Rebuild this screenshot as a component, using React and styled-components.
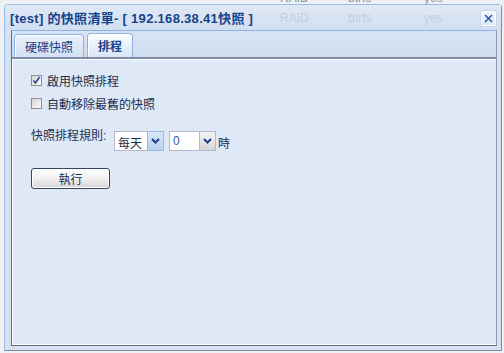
import React from "react";
import styled, { createGlobalStyle } from "styled-components";

const GlobalStyle = createGlobalStyle`
  html, body {
    margin: 0;
    padding: 0;
    background: #eef0f3;
    font-family: "Liberation Sans", "Noto Sans CJK TC", sans-serif;
    font-size: 12px;
  }
`;

const Page = styled.div`
  width: 504px;
  height: 353px;
  position: relative;
  overflow: hidden;
`;

const Backdrop = styled.div`
  height: 4px;
  overflow: hidden;
  position: relative;
`;

const GhostRow = styled.div`
  position: absolute;
  left: 0;
  top: ${p => p.top}px;
  display: flex;
  color: ${p => p.color};
  font-size: 12px;
  line-height: 14px;
  pointer-events: none;
`;

const GhostCell = styled.span`
  position: absolute;
  left: ${p => p.x}px;
  white-space: nowrap;
`;

const Window = styled.div`
  position: relative;
  margin: 0 2px 2px 4px;
  height: 347px;
  box-sizing: border-box;
  border: 1px solid #99bbe8;
  border-right-color: #7d8ea3;
  border-bottom-color: #7d8ea3;
  border-radius: 4px 4px 0 0;
  background: #d6e2f2;
  display: flex;
  flex-direction: column;
`;

const TitleBar = styled.div`
  position: relative;
  height: 25px;
  padding: 0 5px 0 5px;
  display: flex;
  align-items: center;
  background: linear-gradient(#dfe8f5, #d2dff0);
  overflow: hidden;
`;

const Title = styled.span`
  color: #15428b;
  font-weight: bold;
  font-size: 13px;
  letter-spacing: 0.3px;
  white-space: nowrap;
  position: relative;
  z-index: 1;
`;

const CloseBtn = styled.button`
  margin-left: auto;
  width: 15px;
  height: 15px;
  padding: 0;
  margin-top: 1px;
  border: 1px solid #ffffff;
  border-radius: 2px;
  background: linear-gradient(#f4f8fd, #dbe6f5);
  display: flex;
  align-items: center;
  justify-content: center;
  box-shadow: 0 0 0 1px #c5d5ea;
  position: relative;
  z-index: 1;
`;

const TabPanel = styled.div`
  flex: 1;
  margin: 0 4px 4px 6px;
  border: 1px solid #8db2e3;
  border-left-color: #5f6f84;
  border-bottom-color: #5f6f84;
  border-right-color: #8a9ab0;
  display: flex;
  flex-direction: column;
  background: #dfe8f6;
`;

const TabStrip = styled.div`
  height: 25px;
  padding: 1px 0 0 2px;
  display: flex;
  align-items: flex-end;
  gap: 3px;
  background: linear-gradient(#d8e4f4, #cfdcee);
  border-bottom: 2px solid #7e8fa5;
`;

const Tab = styled.div`
  height: ${p => (p.active ? 24 : 23)}px;
  box-sizing: border-box;
  padding: 0 10px;
  min-width: ${p => (p.active ? 46 : 68)}px;
  display: flex;
  align-items: center;
  justify-content: center;
  border: 1px solid #8db2e3;
  border-bottom: none;
  border-radius: 4px 4px 0 0;
  background: ${p =>
    p.active
      ? "linear-gradient(#ffffff, #e3edfa 60%, #dae6f6)"
      : "linear-gradient(#ebf2fb, #d2e0f3)"};
  color: #15428b;
  font-size: 12px;
  font-weight: ${p => (p.active ? "bold" : "normal")};
  box-shadow: inset 1px 1px 0 #ffffff;
`;

const Body = styled.div`
  flex: 1;
  border-top: 1px solid #ffffff;
  border-left: 1px solid #ffffff;
  border-bottom: 1px solid #ffffff;
  padding: 14px 0 0 18px;
  display: flex;
  flex-direction: column;
  color: #1c2f4f;
`;

const CheckRow = styled.label`
  display: flex;
  align-items: center;
  gap: 5px;
  height: 13px;
  margin-bottom: 10px;
  font-size: 12px;
`;

const Box = styled.span`
  width: 11px;
  height: 11px;
  box-sizing: border-box;
  border: 1px solid #8e8f8f;
  background: linear-gradient(135deg, #d4d4d4, #fafafa);
  display: flex;
  align-items: center;
  justify-content: center;
`;

const RuleRow = styled.div`
  display: flex;
  align-items: flex-start;
  margin-top: 9px;
`;

const RuleLabel = styled.span`
  font-size: 12px;
  width: 83px;
  line-height: 14px;
`;

const Combo = styled.div`
  display: flex;
  height: 20px;
  margin-top: 2px;
  margin-right: ${p => p.gap}px;
`;

const ComboText = styled.div`
  width: ${p => p.width}px;
  box-sizing: border-box;
  border: 1px solid #b5b8c8;
  border-right: none;
  background: #ffffff;
  color: ${p => p.color};
  font-size: 12px;
  padding: 2px 0 0 3px;
`;

const ComboArrow = styled.div`
  width: 17px;
  box-sizing: border-box;
  border: 1px solid ${p => (p.hot ? "#99bbe8" : "#b5b8c8")};
  background: ${p =>
    p.hot
      ? "linear-gradient(#d9e7f8, #b9cfee)"
      : "linear-gradient(#f4f4f4, #d6d6d6)"};
  display: flex;
  align-items: center;
  justify-content: center;
`;

const Unit = styled.span`
  font-size: 12px;
  margin-top: 5px;
`;

const RunButton = styled.button`
  margin-top: 17px;
  width: 79px;
  height: 21px;
  box-sizing: border-box;
  border: 1px solid #34455d;
  border-radius: 3px;
  background: linear-gradient(#ffffff, #f1f1f1 50%, #d4d4d4);
  color: #1c2f4f;
  font-family: "Liberation Sans", "Noto Sans CJK TC", sans-serif;
  font-size: 12px;
  padding: 0;
  box-shadow: inset 0 0 0 1px #ffffff;
`;

const ghosts = [
  { x: 280, t: "RAID" },
  { x: 348, t: "btrfs" },
  { x: 424, t: "yes" },
];

const CloseIcon = () => (
  <svg width="11" height="11" viewBox="0 0 11 11">
    <path d="M2 2 L9 9 M9 2 L2 9" stroke="#2d5aa8" strokeWidth="1.6" />
  </svg>
);

const Check = () => (
  <svg width="9" height="9" viewBox="0 0 9 9">
    <path d="M1.5 4.5 L3.5 7 L7.5 1" fill="none" stroke="#2a44a0" strokeWidth="1.6" />
  </svg>
);

const Chevron = () => (
  <svg width="9" height="6" viewBox="0 0 9 6">
    <path d="M1 1 L4.5 4.5 L8 1" fill="none" stroke="#1f3f8a" strokeWidth="2" />
  </svg>
);

const Checkbox = ({ checked, children }) => (
  <CheckRow>
    <Box>{checked && <Check />}</Box>
    {children}
  </CheckRow>
);

const App = () => (
  <Page>
    <GlobalStyle />
    <Backdrop>
      <GhostRow top={-9} color="#8c96a3">
        {ghosts.map(g => (
          <GhostCell key={g.t} x={g.x}>{g.t}</GhostCell>
        ))}
      </GhostRow>
    </Backdrop>
    <Window>
      <TitleBar>
        <GhostRow top={6} color="#c3cedd">
          {ghosts.map(g => (
            <GhostCell key={g.t} x={g.x - 5}>{g.t}</GhostCell>
          ))}
        </GhostRow>
        <Title>[test] 的快照清單- [ 192.168.38.41快照 ]</Title>
        <CloseBtn aria-label="close">
          <CloseIcon />
        </CloseBtn>
      </TitleBar>
      <TabPanel>
        <TabStrip>
          <Tab>硬碟快照</Tab>
          <Tab active>排程</Tab>
        </TabStrip>
        <Body>
          <Checkbox checked>啟用快照排程</Checkbox>
          <Checkbox>自動移除最舊的快照</Checkbox>
          <RuleRow>
            <RuleLabel>快照排程規則:</RuleLabel>
            <Combo gap={5}>
              <ComboText width={33} color="#1c2f4f">每天</ComboText>
              <ComboArrow hot>
                <Chevron />
              </ComboArrow>
            </Combo>
            <Combo gap={2}>
              <ComboText width={30} color="#3b55b0">0</ComboText>
              <ComboArrow>
                <Chevron />
              </ComboArrow>
            </Combo>
            <Unit>時</Unit>
          </RuleRow>
          <RunButton>執行</RunButton>
        </Body>
      </TabPanel>
    </Window>
  </Page>
);

export default App;
